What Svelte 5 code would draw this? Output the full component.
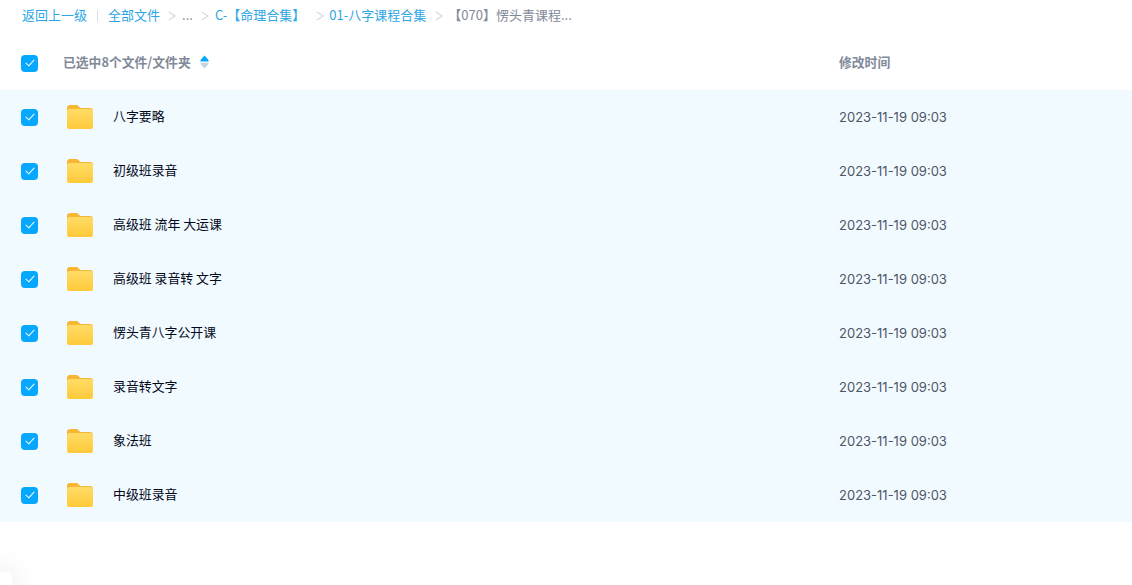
<script>
  const folders = [
    "八字要略",
    "初级班录音",
    "高级班 流年 大运课",
    "高级班 录音转 文字",
    "愣头青八字公开课",
    "录音转文字",
    "象法班",
    "中级班录音",
  ];
  const modified = "2023-11-19 09:03";
</script>

{#snippet check()}
  <span class="check">
    <svg width="10" height="8" viewBox="0 0 10 8" fill="none">
      <path d="M1 4.2 3.8 6.8 9 1.2" stroke="#e8f7ff" stroke-width="1.1" stroke-linecap="round" stroke-linejoin="round" />
    </svg>
  </span>
{/snippet}

{#snippet chevron()}
  <svg class="chev" width="8" height="10" viewBox="0 0 8 10" fill="none">
    <path d="M1 1 7 5 1 9" stroke="#cfd8e3" stroke-width="1.1" />
  </svg>
{/snippet}

<div class="page">
  <svg width="0" height="0" class="defs">
    <defs>
      <linearGradient id="folder-body" x1="0" y1="0" x2="0" y2="1">
        <stop offset="0" stop-color="#ffdc66" />
        <stop offset="1" stop-color="#ffca3a" />
      </linearGradient>
    </defs>
  </svg>

  <nav class="crumbs">
    <a>返回上一级</a>
    <span class="bar"></span>
    <a>全部文件</a>
    {@render chevron()}
    <span class="dots">...</span>
    {@render chevron()}
    <a class="mingli">C-【命理合集】</a>
    {@render chevron()}
    <a class="bazi">01-八字课程合集</a>
    {@render chevron()}
    <span class="current">【070】愣头青课程...</span>
  </nav>

  <div class="head">
    <div class="col-check">{@render check()}</div>
    <div class="col-name">
      <span>已选中8个文件/文件夹</span>
      <svg class="sort" width="9" height="14" viewBox="0 0 9 14">
        <path d="M4.5 0.5 8.5 5V6.5H.5V5Z" fill="#06a7ff" />
        <path d="M.5 7.8H8.5V9L4.5 13.5.5 9Z" fill="#c9d3df" />
      </svg>
    </div>
    <div class="col-time">修改时间</div>
  </div>

  <ul class="list">
    {#each folders as name}
      <li class="row">
        <div class="col-check">{@render check()}</div>
        <svg class="folder" width="26" height="24" viewBox="0 0 26 24">
          <path d="M0 3C0 1.3 1.2 0 3 0H9C10.4 0 11.2.6 12 1.6L13 3H23C24.800 3 26 4.200 26 6V12H0Z" fill="#f7b733" />
          <rect x="0" y="4" width="26" height="20" rx="2.600" fill="url(#folder-body)" />
        </svg>
        <div class="name">{name}</div>
        <div class="col-time time">{modified}</div>
      </li>
    {/each}
  </ul>

  <div class="corner"></div>
</div>

<style>
  :global(body) {
    margin: 0;
    background: #fff;
  }
  .page {
    position: relative;
    width: 1132px;
    height: 585px;
    overflow: hidden;
    font-family: "Noto Sans CJK SC", "Noto Sans", sans-serif;
  }
  .defs {
    position: absolute;
  }
  .crumbs {
    display: flex;
    align-items: center;
    height: 29px;
    padding-left: 22px;
    font-size: 13px;
    white-space: nowrap;
  }
  .crumbs a {
    color: #2ea6e6;
  }
  .bar {
    width: 1px;
    height: 12px;
    margin: 2px 10px 0;
    background: #d5dfea;
  }
  .chev {
    margin: 2px 5px 0 8px;
  }
  .dots {
    color: #818999;
    margin: 0 0 0 1px;
  }
  .mingli {
    margin: 0 3px 0 1px;
  }
  .bazi {
    margin-right: 1px;
  }
  .current {
    color: #818999;
  }
  .head {
    display: flex;
    align-items: center;
    height: 61px;
    font-size: 12.800px;
    font-weight: 700;
    color: #818999;
  }
  .col-check {
    display: flex;
    width: 63px;
    padding-left: 21px;
    box-sizing: border-box;
    flex: none;
  }
  .head .col-check {
    margin-top: 7px;
  }
  .col-name {
    display: flex;
    align-items: center;
    gap: 9px;
    flex: none;
    width: 776px;
    margin-top: 3px;
  }
  .sort {
    margin-top: 1px;
  }
  .head .col-time {
    margin-top: 4px;
  }
  .check {
    display: flex;
    align-items: center;
    justify-content: center;
    width: 17px;
    height: 17px;
    border-radius: 4px;
    background: #06a7ff;
  }
  .list {
    margin: 0;
    padding: 0;
    list-style: none;
    background: #f1faff;
  }
  .row {
    display: flex;
    align-items: center;
    height: 54px;
  }
  .row .col-check {
    width: 67px;
  }
  .folder {
    flex: none;
  }
  .name {
    flex: none;
    width: 726px;
    margin-left: 20px;
    margin-top: -4px;
    font-size: 12.900px;
    color: #03081a;
  }
  .time {
    font-family: Inter, "Liberation Sans", sans-serif;
    font-size: 13px;
    color: #4f5666;
  }
  .corner {
    position: absolute;
    left: -8px;
    top: 572px;
    width: 20px;
    height: 30px;
    border-radius: 5px;
    background: #fff;
    box-shadow: 0 0 30px rgba(0, 0, 0, 0.12);
  }
</style>
